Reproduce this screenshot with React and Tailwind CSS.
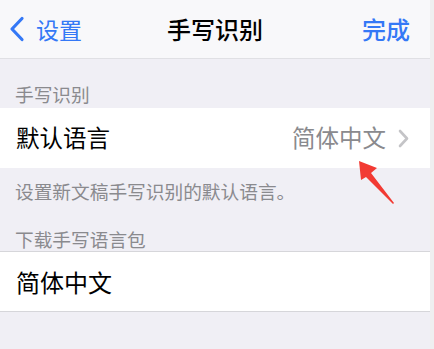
const font = { fontFamily: '"Noto Sans CJK SC", "Noto Sans", sans-serif' };

export default function App() {
  return (
    <div className="relative flex h-[349px] w-[434px] overflow-hidden bg-[#efeff0]" style={font}>
      <div className="flex w-[430px] flex-col bg-[#f0eff5]">
        {/* Nav bar */}
        <div className="relative flex h-[59px] items-center border-b border-[#e0e0e4] bg-[#f8f8fa]">
          <div className="flex items-center pl-[8px] text-[#3478f6]">
            <svg width="18" height="26" viewBox="0 0 18 26">
              <path d="M14 2.5 L4 13 L14 23.5" fill="none" stroke="#3478f6" strokeWidth="3.2" strokeLinecap="round" strokeLinejoin="round" />
            </svg>
            <span className="ml-[10px] text-[23px] leading-none">设置</span>
          </div>
          <span className="absolute left-1/2 -translate-x-1/2 text-[24px] font-medium leading-none text-black">手写识别</span>
          <span className="ml-auto pr-[20px] text-[24px] font-medium leading-none text-[#3478f6]">完成</span>
        </div>

        {/* Section 1 */}
        <div className="pl-[15px] pt-[24px] pb-[3px] text-[18.7px] leading-[22px] text-[#8a8a8e]">手写识别</div>
        <div className="flex h-[60px] items-center bg-white pl-[16px] pr-[21px]">
          <span className="text-[23.5px] text-black">默认语言</span>
          <span className="ml-auto text-[23.5px] text-[#8a8a8e]">简体中文</span>
          <svg className="ml-[12px]" width="11" height="19" viewBox="0 0 11 19">
            <path d="M2 2 L9 9.5 L2 17" fill="none" stroke="#c4c4c7" strokeWidth="2.6" strokeLinecap="round" strokeLinejoin="round" />
          </svg>
        </div>
        <div className="pl-[15px] pt-[12px] text-[18.7px] leading-[22px] text-[#8a8a8e]">设置新文稿手写识别的默认语言。</div>

        {/* Section 2 */}
        <div className="pl-[15px] pt-[26px] pb-[1px] text-[18.7px] leading-[22px] text-[#8a8a8e]">下载手写语言包</div>
        <div className="flex h-[61px] items-center border-y border-[#d6d6da] bg-white pl-[16px]">
          <span className="text-[24px] text-black">简体中文</span>
        </div>
      </div>

      {/* Red annotation arrow */}
      <svg className="absolute left-[352px] top-[156px]" width="48" height="52" viewBox="0 0 48 52">
        <polygon points="7,5 25,12 19,17 42,47 41,48 14,21 9,24" fill="#f23a33" />
      </svg>
    </div>
  );
}
